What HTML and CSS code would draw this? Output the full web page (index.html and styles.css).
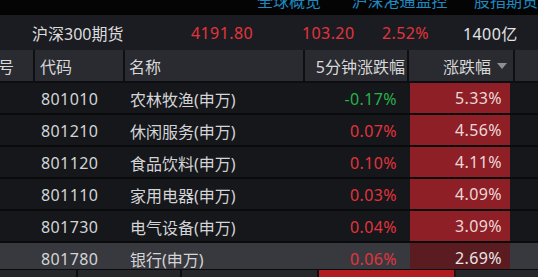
FILE: index.html
```html
<!DOCTYPE html>
<html lang="zh-CN">
<head>
<meta charset="utf-8">
<link rel="stylesheet" href="styles.css">
</head>
<body>
<div class="topnav">
  <span class="nav nav1">全球概览</span>
  <span class="nav nav2">沪深港通监控</span>
  <span class="nav nav3">股指期货</span>
</div>
<div class="summary">
  <span class="s-name">沪深300期货</span>
  <span class="s-price up num">4191.80</span>
  <span class="s-chg up num">103.20</span>
  <span class="s-pct up num">2.52%</span>
  <span class="s-amt num">1400亿</span>
</div>
<div class="table">
  <div class="row head">
    <div class="c c0"><span class="clip">号</span></div>
    <div class="c c1">代码</div>
    <div class="c c2">名称</div>
    <div class="c c3 r">5分钟涨跌幅</div>
    <div class="c c4 r">涨跌幅<span class="arrow"></span></div>
    <div class="c c5"></div>
  </div>
  <div class="row">
    <div class="c c0"></div>
    <div class="c c1 num">801010</div>
    <div class="c c2">农林牧渔(申万)</div>
    <div class="c c3 r num down">-0.17%</div>
    <div class="c c4"><div class="pct num">5.33%</div></div>
    <div class="c c5"></div>
  </div>
  <div class="row">
    <div class="c c0"></div>
    <div class="c c1 num">801210</div>
    <div class="c c2">休闲服务(申万)</div>
    <div class="c c3 r num up">0.07%</div>
    <div class="c c4"><div class="pct num">4.56%</div></div>
    <div class="c c5"></div>
  </div>
  <div class="row">
    <div class="c c0"></div>
    <div class="c c1 num">801120</div>
    <div class="c c2">食品饮料(申万)</div>
    <div class="c c3 r num up">0.10%</div>
    <div class="c c4"><div class="pct num">4.11%</div></div>
    <div class="c c5"></div>
  </div>
  <div class="row">
    <div class="c c0"></div>
    <div class="c c1 num">801110</div>
    <div class="c c2">家用电器(申万)</div>
    <div class="c c3 r num up">0.03%</div>
    <div class="c c4"><div class="pct num">4.09%</div></div>
    <div class="c c5"></div>
  </div>
  <div class="row">
    <div class="c c0"></div>
    <div class="c c1 num">801730</div>
    <div class="c c2">电气设备(申万)</div>
    <div class="c c3 r num up">0.04%</div>
    <div class="c c4"><div class="pct num">3.09%</div></div>
    <div class="c c5"></div>
  </div>
  <div class="row sel">
    <div class="c c0"></div>
    <div class="c c1 num">801780</div>
    <div class="c c2">银行(申万)</div>
    <div class="c c3 r num up">0.06%</div>
    <div class="c c4"><div class="pct num">2.69%</div></div>
    <div class="c c5"></div>
  </div>
</div>
<div class="bottombar">
  <div class="b b1"></div>
  <div class="b b2"></div>
  <div class="b b3"></div>
  <div class="b b4"></div>
  <div class="b b5"></div>
</div>
</body>
</html>
```
FILE: styles.css
```css
html, body {
  margin: 0;
  padding: 0;
  background: #0c0d10;
  width: 538px;
  height: 277px;
  overflow: hidden;
  font-family: "Noto Sans", "Noto Sans CJK SC", sans-serif;
  font-size: 16px;
  color: #d4d4d6;
}
.num { letter-spacing: 0.4px; }
.up { color: #e3343c; }
.down { color: #25b24a; }

.topnav {
  height: 15px;
  background: #040405;
  overflow: hidden;
  display: flex;
  padding-left: 257px;
}
.nav {
  display: block;
  line-height: 20px;
  margin-top: -9px;
  color: #1f8ac0;
  white-space: nowrap;
}
.nav1 { width: 105px; }
.nav2 { width: 136px; }

.summary {
  height: 35px;
  background: #1b1c21;
  display: flex;
  align-items: center;
  padding-left: 32px;
  white-space: nowrap;
}
.s-name { width: 159px; color: #dcdcde; }
.s-price { width: 111px; }
.s-chg { width: 80px; }
.s-pct { width: 81px; }
.s-amt { color: #e4e4e6; }

.table {
  display: flex;
  flex-direction: column;
  height: 219px;
  overflow: hidden;
}
.row {
  display: grid;
  grid-template-columns: 33px 90px 180px 104px 106px 25px;
  height: 30px;
  flex: none;
  border-bottom: 2px solid #0a0b0d;
  background: #15171b;
}
.row.head {
  background: #2a2b30;
  height: 31px;
  border-bottom: 2px solid #0d0e11;
}
.row.sel { background: #38393e; }
.c {
  display: flex;
  align-items: center;
  white-space: nowrap;
  overflow: hidden;
  min-width: 0;
}
.row:not(.head) .c { padding-top: 2px; }
.c.r { justify-content: flex-end; }
.head .c { color: #d8d8da; }
.head .c1, .head .c2, .head .c3, .head .c4, .head .c5 {
  border-left: 2px solid #0e0f12;
}
.c0 .clip { margin-left: -2px; }
.c1 { padding-left: 8px; }
.head .c1 { padding-left: 5px; }
.c2 { padding-left: 7px; }
.head .c2 { padding-left: 4px; }
.c3 { padding-right: 10px; }
.head .c3 { padding-right: 2px; }
.head .c4 { padding-right: 6px; }
.arrow {
  width: 0;
  height: 0;
  border-left: 5px solid transparent;
  border-right: 5px solid transparent;
  border-top: 6px solid #8e8f94;
  margin-left: 6px;
}
.row:not(.head) .c4 { padding: 0 3px; }
.pct {
  flex: 1;
  align-self: stretch;
  background: #8f1f26;
  color: #ecd8d8;
  display: flex;
  align-items: center;
  justify-content: flex-end;
  padding: 2px 8px 0 0;
  margin-top: -2px;
}
.sel .pct { background: #5a1b21; color: #ece4e6; }

.bottombar {
  display: flex;
  height: 8px;
  background: #26272b;
  border-top: 1px solid #0a0b0d;
  box-sizing: border-box;
}
.b { border-right: 2px solid #0d0e11; }
.b1 { width: 76px; }
.b2 { width: 102px; }
.b3 { width: 135px; }
.b4 { width: 135px; background: #b01c20; border-right: 2px solid #2a1012; }
.b5 { flex: 1; border-right: none; }
```
